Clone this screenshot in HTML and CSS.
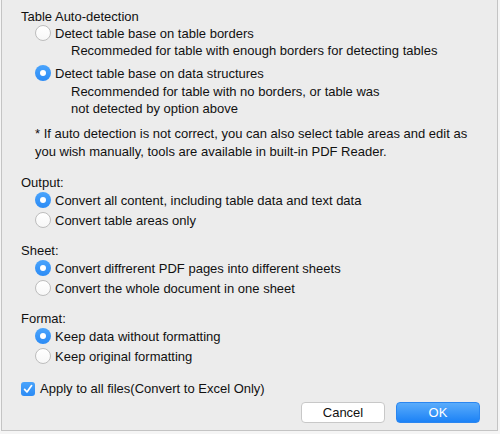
FILE: index.html
```html
<!DOCTYPE html>
<html>
<head>
<meta charset="utf-8">
<link rel="stylesheet" href="styles.css">
</head>
<body>
<div class="window">
  <div class="heading h-first">Table Auto-detection</div>
  <div class="radio-row"><span class="radio"></span><span>Detect table base on table borders</span></div>
  <div class="sub">Recommeded for table with enough borders for detecting tables</div>
  <div class="radio-row r-second"><span class="radio on"></span><span>Detect table base on data structures</span></div>
  <div class="sub sub-b">Recommended for table with no borders, or table was<br>not detected by option above</div>
  <div class="note">* If auto detection is not correct, you can also select table areas and edit as<br>you wish manually, tools are available in built-in PDF Reader.</div>

  <div class="heading h-out">Output:</div>
  <div class="group">
    <div class="radio-row r20"><span class="radio on"></span><span>Convert all content, including table data and text data</span></div>
    <div class="radio-row r20"><span class="radio"></span><span>Convert table areas only</span></div>
  </div>

  <div class="heading h-sec">Sheet:</div>
  <div class="group">
    <div class="radio-row r20"><span class="radio on"></span><span>Convert diffrerent PDF pages into different sheets</span></div>
    <div class="radio-row r20"><span class="radio"></span><span>Convert the whole document in one sheet</span></div>
  </div>

  <div class="heading h-sec">Format:</div>
  <div class="group">
    <div class="radio-row r20"><span class="radio on"></span><span>Keep data without formatting</span></div>
    <div class="radio-row r20"><span class="radio"></span><span>Keep original formatting</span></div>
  </div>

  <div class="check-row">
    <span class="checkbox"><svg width="14" height="14" viewBox="0 0 14 14"><path d="M3.6 7.4 L6 10 L10.6 3.6" fill="none" stroke="#fff" stroke-width="1.7" stroke-linecap="round" stroke-linejoin="round"/></svg></span>
    <span>Apply to all files(Convert to Excel Only)</span>
  </div>

  <div class="buttons">
    <button class="btn cancel">Cancel</button>
    <button class="btn ok">OK</button>
  </div>
</div>
</body>
</html>
```

FILE: styles.css
```css
html, body {
  margin: 0;
  padding: 0;
  background: #f5f5f5;
}
body {
  width: 500px;
  height: 434px;
  overflow: hidden;
  font-family: "Liberation Sans", Arial, sans-serif;
  font-size: 13px;
  color: #111111;
}
.window {
  box-sizing: border-box;
  margin-left: 1px;
  width: 497px;
  height: 431px;
  background: #ececec;
  border-left: 1px solid #c4c4c4;
  border-right: 1px solid #c4c4c4;
  border-bottom: 1px solid #c4c4c4;
  padding: 8px 17px 0 19px;
}
.heading {
  line-height: 17px;
  height: 17px;
}
.h-out { margin-top: 13px; }
.h-sec { margin-top: 11px; }
.radio-row {
  display: flex;
  align-items: center;
  height: 17px;
  line-height: 17px;
  padding-left: 14px;
}
.radio-row.r20 {
  height: 20px;
  line-height: 20px;
}
.r-second { margin-top: 6px; }
.radio {
  box-sizing: border-box;
  width: 16px;
  height: 16px;
  border-radius: 50%;
  border: 1px solid #bdbdbd;
  background: linear-gradient(#ffffff, #f7f7f7);
  margin-right: 4px;
  flex: none;
  position: relative;
  top: -1px;
}
.radio.on {
  border: none;
  background: linear-gradient(#4aa4fc, #2b8bf5);
}
.radio.on::after {
  content: "";
  position: absolute;
  left: 5px;
  top: 5px;
  width: 6px;
  height: 6px;
  border-radius: 50%;
  background: #fff;
}
.sub {
  padding-left: 50px;
  line-height: 17px;
}
.sub-b { margin-top: 1px; }
.note {
  padding-left: 14px;
  line-height: 18px;
  margin-top: 8px;
}
.check-row {
  display: flex;
  align-items: center;
  height: 20px;
  line-height: 20px;
  margin-top: 12px;
}
.checkbox {
  box-sizing: border-box;
  width: 14px;
  height: 14px;
  border-radius: 3px;
  background: linear-gradient(#4aa4fc, #2b8bf5);
  margin-right: 5px;
  flex: none;
  display: flex;
}
.buttons {
  display: flex;
  justify-content: flex-end;
  gap: 11px;
  margin-top: 3px;
  padding-right: 0;
}
.btn {
  box-sizing: border-box;
  width: 84px;
  height: 21px;
  border-radius: 4px;
  font-family: "Liberation Sans", Arial, sans-serif;
  font-size: 13px;
  line-height: 19px;
  padding: 0;
  text-align: center;
}
.cancel {
  background: #ffffff;
  border: 1px solid #c8c8c8;
  color: #111111;
}
.ok {
  background: linear-gradient(#5aacfb, #1c82f6);
  border: 1px solid #2a86f0;
  color: #ffffff;
}
```
